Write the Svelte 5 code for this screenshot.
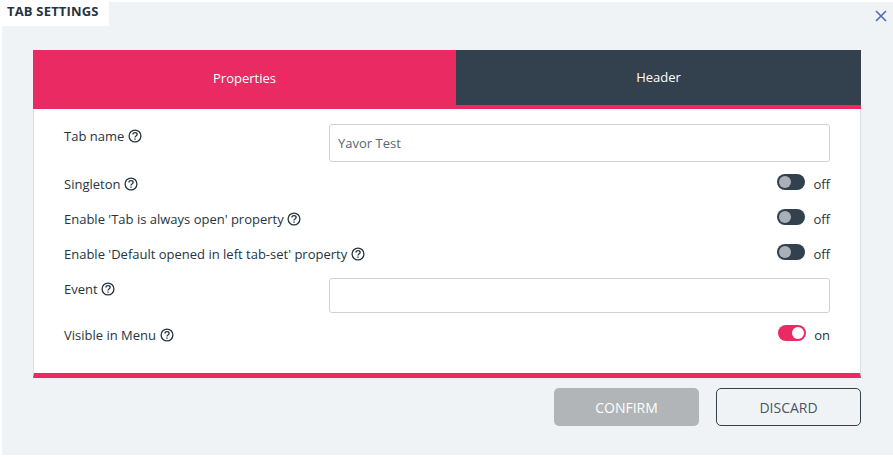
<script>
  const rows = [
    { label: 'Singleton', type: 'toggle', on: false },
    { label: "Enable 'Tab is always open' property", type: 'toggle', on: false },
    { label: "Enable 'Default opened in left tab-set' property", type: 'toggle', on: false },
    { label: 'Event', type: 'input', value: '' },
    { label: 'Visible in Menu', type: 'toggle', on: true }
  ];
</script>

{#snippet help()}
  <svg class="help" width="14" height="14" viewBox="0 0 14 14" fill="none" stroke="#26343f" stroke-width="1.3">
    <circle cx="7" cy="7" r="5.9" />
    <path d="M4.9 5.6c0-1.3 1-1.9 2.1-1.9s2.1.7 2.1 1.7c0 1.6-2.1 1.5-2.1 3" />
    <path d="M7 9.5v1.3" stroke-width="1.4" />
  </svg>
{/snippet}

<div class="modal">
  <div class="top">
    <div class="title">TAB SETTINGS</div>
    <svg class="close" width="12" height="12" viewBox="0 0 12 12" stroke="#4f6bb5" stroke-width="1.6" fill="none">
      <path d="M1 1l10 10M11 1L1 11" />
    </svg>
  </div>

  <div class="card">
    <div class="tabs">
      <div class="tab active">Properties</div>
      <div class="tab">Header</div>
    </div>
    <div class="body">
      <div class="row first">
        <div class="label">Tab name {@render help()}</div>
        <input class="field" value="Yavor Test" />
      </div>
      {#each rows as r}
        {#if r.type === 'toggle'}
          <div class="row tog">
            <div class="label">{r.label} {@render help()}</div>
            <div class="switch">
              <span class="track" class:on={r.on}><span class="knob"></span></span>
              <span class="state">{r.on ? 'on' : 'off'}</span>
            </div>
          </div>
        {:else}
          <div class="row ev">
            <div class="label">{r.label} {@render help()}</div>
            <input class="field" value={r.value} />
          </div>
        {/if}
      {/each}
    </div>
  </div>

  <div class="actions">
    <button class="btn confirm">CONFIRM</button>
    <button class="btn discard">DISCARD</button>
  </div>
</div>

<style>
  :global(body) {
    margin: 0;
    background: #fff;
  }
  .modal {
    box-sizing: border-box;
    width: 891px;
    height: 453px;
    margin: 2px 0 0 2px;
    background: #eff3f6;
    font-family: "Open Sans", sans-serif;
    font-size: 13px;
    color: #26343f;
  }
  .top {
    display: flex;
    justify-content: space-between;
    align-items: flex-start;
    height: 48px;
  }
  .title {
    box-sizing: border-box;
    width: 107px;
    margin-top: -2px;
    height: 26px;
    padding: 2px 0 0 5px;
    background: #fff;
    font-size: 13px;
    font-weight: 700;
    line-height: 19px;
    letter-spacing: 0.18px;
    white-space: nowrap;
  }
  .close {
    margin: 8px 6px 0 0;
  }
  .card {
    margin-left: 31px;
    width: 828px;
  }
  .tabs {
    display: grid;
    grid-template-columns: 423px 405px;
    height: 59px;
    align-items: start;
  }
  .tab {
    box-sizing: border-box;
    display: flex;
    align-items: center;
    justify-content: center;
    height: 55px;
    padding-bottom: 2px;
    background: #33414e;
    box-shadow: 0 4px 0 #e92a63;
    color: #fff;
    font-weight: 500;
    font-size: 13px;
  }
  .tab.active {
    height: 59px;
    background: #e92a63;
    box-shadow: none;
    font-weight: 400;
    padding-bottom: 4px;
  }
  .body {
    box-sizing: border-box;
    height: 269px;
    padding: 15px 30px 0;
    background: #fff;
    border-left: 1px solid #dcdfe2;
    border-right: 1px solid #dcdfe2;
    border-bottom: 5px solid #e92a63;
  }
  .row {
    display: flex;
    justify-content: space-between;
    align-items: flex-start;
  }
  .first {
    height: 42px;
  }
  .tog {
    height: 35px;
    align-items: center;
  }
  .ev {
    height: 35px;
    margin: 7px 0 4px;
  }
  .label {
    line-height: 18px;
    white-space: nowrap;
    display: flex;
    align-items: center;
    gap: 3.6px;
  }
  .first .label {
    margin-top: 3px;
  }
  .ev .label {
    margin-top: 2px;
  }
  .help {
    display: block;
  }
  .field {
    box-sizing: border-box;
    width: 501px;
    height: 38px;
    padding: 0 8px;
    border: 1px solid #cfd2d4;
    border-radius: 3px;
    background: #fff;
    font-family: inherit;
    font-size: 13px;
    color: #5b6670;
    outline: none;
  }
  .ev .field {
    height: 35px;
  }
  .switch {
    display: flex;
    align-items: center;
    gap: 8px;
  }
  .track {
    position: relative;
    display: block;
    width: 28px;
    height: 16px;
    margin-top: -3px;
    border-radius: 8px;
    background: #33414e;
  }
  .knob {
    position: absolute;
    top: 2px;
    left: 2px;
    width: 12px;
    height: 12px;
    border-radius: 50%;
    background: #a9b0b8;
  }
  .track.on {
    background: #e92a63;
  }
  .track.on .knob {
    left: 14px;
    background: #fff;
  }
  .state {
    line-height: 18px;
  }
  .actions {
    display: flex;
    justify-content: flex-end;
    gap: 17px;
    width: 859px;
    margin-top: 10px;
  }
  .btn {
    box-sizing: border-box;
    width: 145px;
    height: 38px;
    border-radius: 5px;
    font-family: inherit;
    font-size: 14px;
    padding: 0;
  }
  .confirm {
    border: 0;
    background: #b1b5b8;
    color: #fff;
    font-weight: 500;
  }
  .discard {
    border: 1px solid #33414e;
    background: transparent;
    color: #4a5568;
  }
</style>
